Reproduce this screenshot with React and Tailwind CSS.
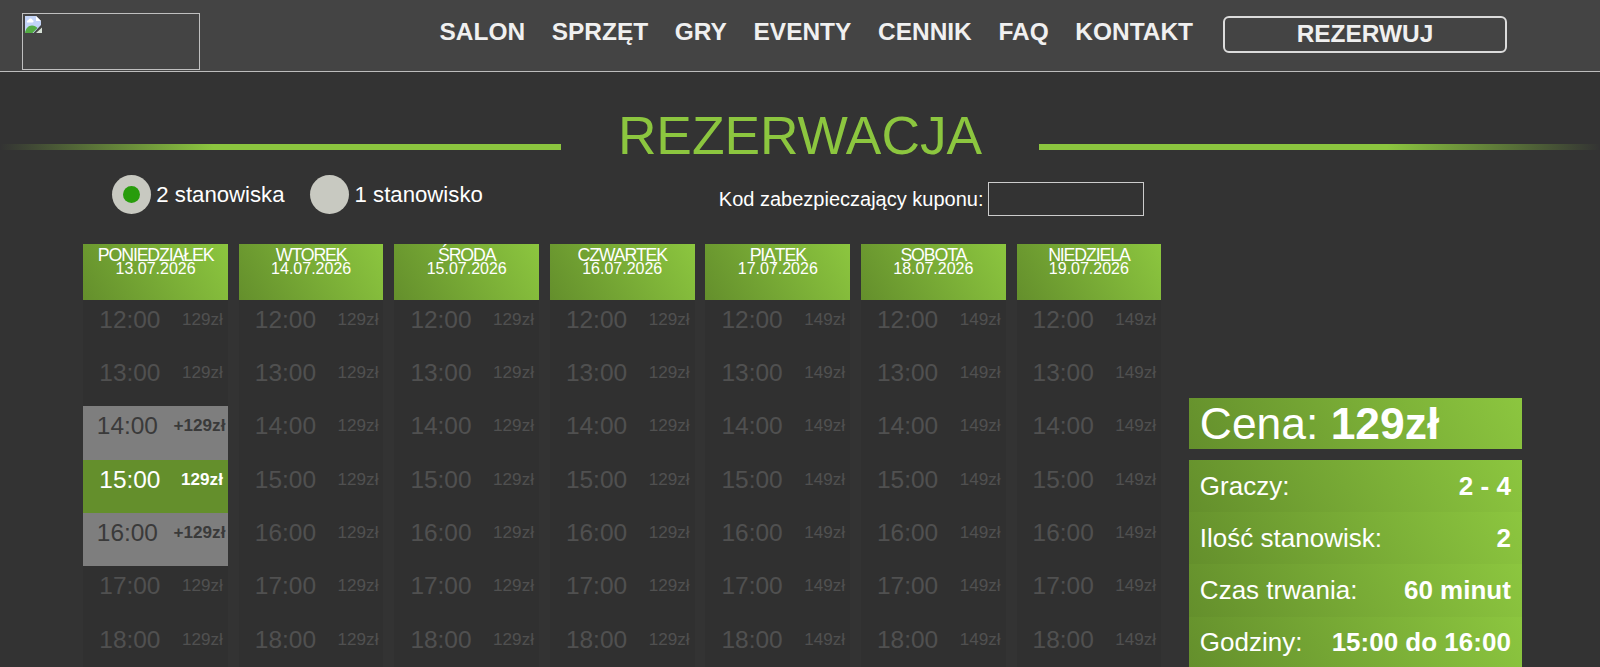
import React from 'react';

const links = ['SALON', 'SPRZĘT', 'GRY', 'EVENTY', 'CENNIK', 'FAQ', 'KONTAKT'];

const hours = ['12:00', '13:00', '14:00', '15:00', '16:00', '17:00', '18:00'];

const days = [
  { name: 'PONIEDZIAŁEK', date: '13.07.2026', price: '129zł', slots: { '14:00': 'extra', '15:00': 'selected', '16:00': 'extra' } },
  { name: 'WTOREK', date: '14.07.2026', price: '129zł', slots: {} },
  { name: 'ŚRODA', date: '15.07.2026', price: '129zł', slots: {} },
  { name: 'CZWARTEK', date: '16.07.2026', price: '129zł', slots: {} },
  { name: 'PIĄTEK', date: '17.07.2026', price: '149zł', slots: {} },
  { name: 'SOBOTA', date: '18.07.2026', price: '149zł', slots: {} },
  { name: 'NIEDZIELA', date: '19.07.2026', price: '149zł', slots: {} },
];

const summary = [
  ['Graczy:', '2 - 4'],
  ['Ilość stanowisk:', '2'],
  ['Czas trwania:', '60 minut'],
  ['Godziny:', '15:00 do 16:00'],
];

const slotStyles = {
  disabled: 'bg-[#303030] text-[#505050] pl-[16px] pr-[5px]',
  extra: 'bg-[#7e7e7e] text-[#3a3a3a] pl-[13.5px] pr-[2.5px]',
  selected: 'bg-[#648f2c] text-white pl-[16px] pr-[5px]',
};

// Placeholder for a missing logo
const Logo = () => (
  <div className="mt-[13px] ml-[22px] h-[57px] w-[178px] border border-[#c0c0c0] p-px">
    <svg width="18" height="18" viewBox="0 0 18 18" className="block">
      <path d="M1 1h11l5 5v4L9.500 18H1z" fill="#c3d4f7" />
      <path d="M1 18c.5-4 3-7.500 7-7.500 2.500 0 4 1 5.500 2.500L8.500 18z" fill="#53ac43" />
      <path d="M3 7.500C2.500 6 3.500 5 4.500 5c.5-2 3.500-2 4 0 1.500 0 1.500 2.500 0 2.500z" fill="#fff" />
      <path d="M12 1v5h5z" fill="#fff" />
      <path d="M18 12.500V18h-6z" fill="#d5dfd5" />
    </svg>
  </div>
);

const Navbar = () => (
  <header className="flex h-[72px] items-start border-b border-[#bdbdbd] bg-[#444]">
    <Logo />
    <nav className="ml-[239.5px] mt-[14px] flex gap-[26.7px] text-[24.44px] leading-9 font-bold text-[#f0f0f0]">
      {links.map((link) => (
        <a key={link} href="#">{link}</a>
      ))}
    </nav>
    <a href="#" className="mt-[16px] ml-[30px] flex h-[37px] w-[284px] items-center justify-center rounded-md border-2 border-[#dcdcdc] text-[24.44px] font-bold text-[#f0f0f0]">
      REZERWUJ
    </a>
  </header>
);

const Title = () => (
  <div className="mt-[31px] flex h-[65px] justify-between">
    <div className="mt-[41px] h-1.5 w-[561px] bg-linear-to-r from-transparent to-[#8cc63f] to-[38%]" />
    <h1 className="text-[53.3px] leading-[66px] text-[#8cc63f]">REZERWACJA</h1>
    <div className="mt-[41px] h-1.5 w-[561px] bg-linear-to-l from-transparent to-[#8cc63f] to-[38%]" />
  </div>
);

const Radio = ({ label, checked }) => (
  <label className="flex items-center gap-[5.5px] text-[22.2px] text-white">
    <span className="flex size-[39px] items-center justify-center rounded-full bg-[#c8c9c1]">
      {checked && <span className="size-[17px] rounded-full bg-[#289c0c]" />}
    </span>
    {label}
  </label>
);

const Day = ({ day }) => (
  <div className="w-[144.6px]">
    <div className="h-[55.6px] bg-[linear-gradient(60deg,#648f2c,#8cc63f)] pt-[5px] text-center text-white">
      <div className="text-[17.78px] leading-[13px] tracking-[-1.15px]">{day.name}</div>
      <div className="text-base leading-[14px]">{day.date}</div>
    </div>
    {hours.map((hour) => {
      const state = day.slots[hour] || 'disabled';
      return (
        <div key={hour} className={`flex h-[53.33px] justify-between leading-[40px] ${slotStyles[state]}`}>
          <span className="text-[24.44px]">{hour}</span>
          <span className={state === 'disabled' ? 'text-[17.1px]' : 'text-[17.1px] font-bold'}>
            {state === 'extra' ? '+' : ''}{day.price}
          </span>
        </div>
      );
    })}
  </div>
);

const Summary = () => (
  <aside className="mt-[153.5px] w-[333px] text-white">
    <div className="h-[51.4px] bg-[linear-gradient(60deg,#648f2c,#8cc63f)] pl-[11px] text-[44.4px] leading-[51.4px]">
      Cena: <b>129zł</b>
    </div>
    <div className="mt-[11px]">
      {summary.map(([label, value]) => (
        <div key={label} className="flex h-[52.3px] items-center justify-between bg-[linear-gradient(60deg,#648f2c,#8cc63f)] px-[11px] text-[26px]">
          <span>{label}</span>
          <b>{value}</b>
        </div>
      ))}
    </div>
  </aside>
);

const App = () => (
  <div className="h-[667px] overflow-hidden bg-[#333] font-['Liberation_Sans',Arial,sans-serif]">
    <Navbar />
    <Title />
    <div className="flex h-[76px] items-start pl-[111.8px]">
      <div className="mt-[7px] flex gap-[25.500px]">
        <Radio label="2 stanowiska" checked />
        <Radio label="1 stanowisko" />
      </div>
      <label className="mt-[14px] ml-[236px] flex items-center gap-[5px] text-[20px] text-white">
        <span className="pb-px">Kod zabezpieczający kuponu:</span>
        <input type="text" className="h-[34px] w-[156px] border border-[#ccc] outline-none" />
      </label>
    </div>
    <main className="flex items-start gap-[27.700px] pl-[83.3px]">
      <div className="flex gap-[10.96px]">
        {days.map((day) => (
          <Day key={day.name} day={day} />
        ))}
      </div>
      <Summary />
    </main>
  </div>
);

export default App;
